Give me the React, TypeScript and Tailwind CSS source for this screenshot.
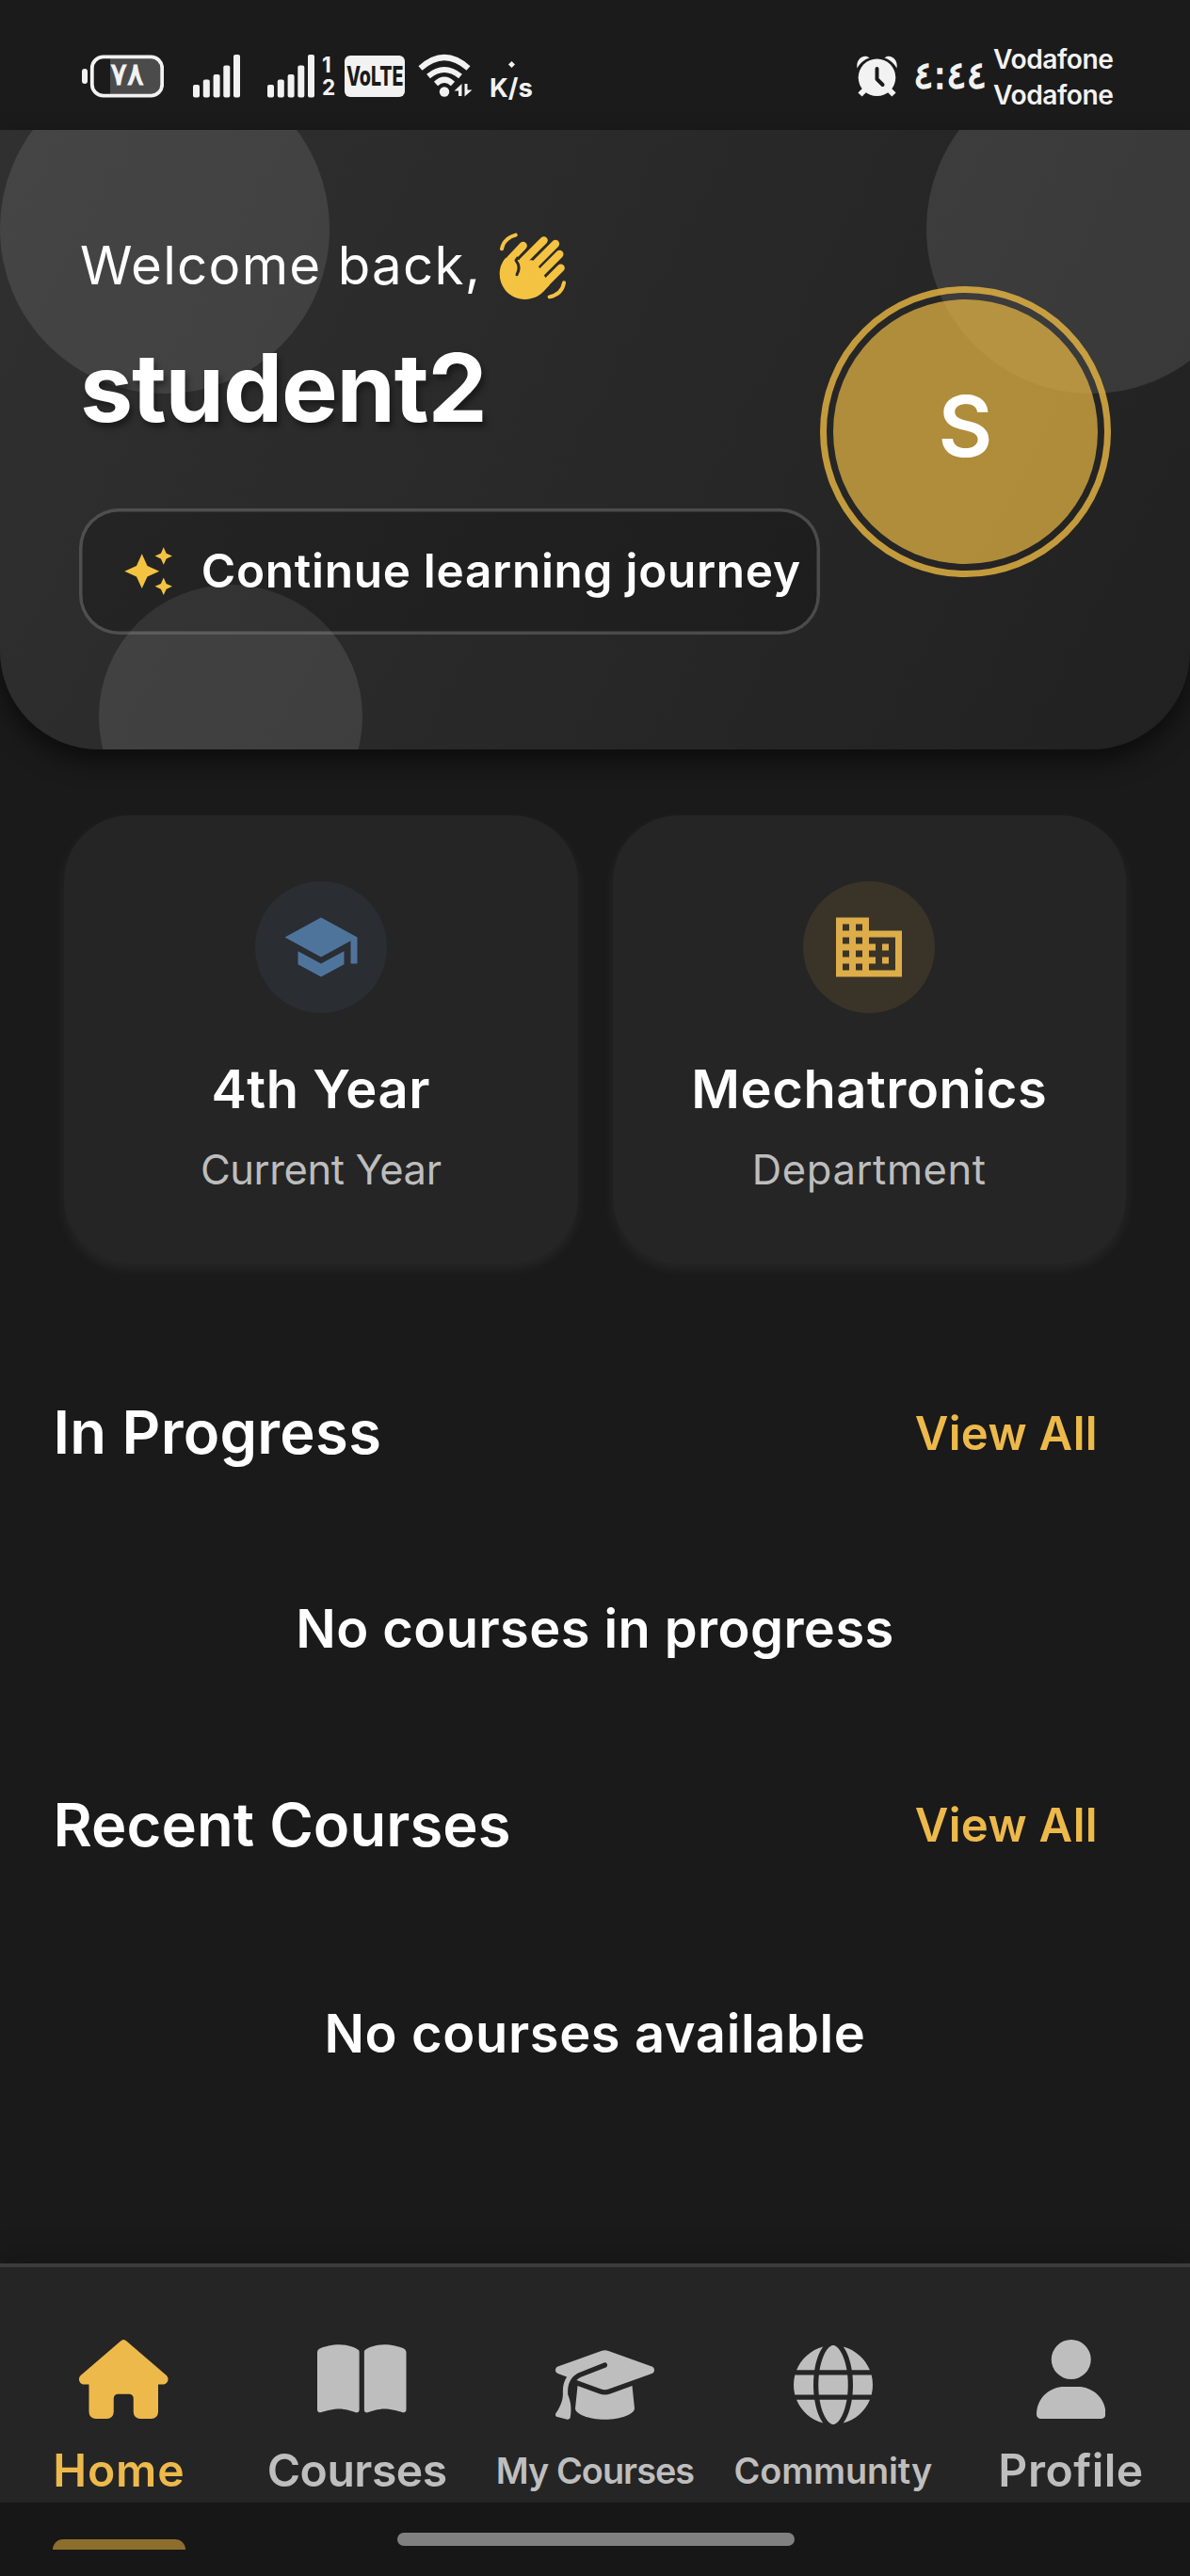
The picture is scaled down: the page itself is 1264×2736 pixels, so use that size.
import type { ReactNode } from "react";
import { MdAutoAwesome, MdBusiness, MdSchool } from "react-icons/md";
import { FaBookOpen, FaGlobe, FaGraduationCap, FaUser } from "react-icons/fa6";

const SIGNAL_BARS = [
  { x: 0, y: 92 },
  { x: 10.8, y: 86.5 },
  { x: 21.6, y: 81 },
  { x: 32.3, y: 71.5 },
  { x: 43, y: 60 },
];

function Battery() {
  return (
    <div className="relative h-[138px] w-[87px] shrink-0">
      <svg viewBox="87 0 87 138" className="h-full w-full">
        <rect x="87" y="73" width="6" height="16" rx="3" fill="#f2f2f2" />
        <path d="M117 62h42a12 12 0 0 1 12 12v14a12 12 0 0 1-12 12h-42z" fill="#4b4b4b" />
        <rect x="97.8" y="60.3" width="74.4" height="41.4" rx="12" fill="none" stroke="#f2f2f2" strokeWidth="3.8" />
      </svg>
      <span className="absolute top-[58px] left-[27px] w-[42px] text-center font-['DejaVu_Sans'] text-[33px] leading-[42px] tracking-[-1.500px] text-[#f2f2f2] [-webkit-text-stroke:1.200px_#f2f2f2]">
        ٧٨
      </span>
    </div>
  );
}

function Signal() {
  return (
    <svg viewBox="0 0 51 138" className="h-[138px] w-[51px] shrink-0">
      {SIGNAL_BARS.map((bar) => (
        <rect key={bar.x} x={bar.x} y={bar.y} width="7" height={105.5 - bar.y} rx="2" fill="#f2f2f2" />
      ))}
    </svg>
  );
}

function Wifi() {
  return (
    <svg viewBox="444 0 58 138" className="h-[138px] w-[58px] shrink-0" fill="none" stroke="#f2f2f2" strokeWidth="6">
      <path d="M446.5 74.5Q472 51.5 497.5 74.5" />
      <path d="M455 83Q472 69 489 83" />
      <path d="M463 91Q472 82.5 481 91" />
      <circle cx="472" cy="99.5" r="5.2" fill="#f2f2f2" stroke="none" />
      <path d="M482.5 98.500L490.500 91V104h-3.500v-5.500zM501.500 97.500L493.500 104.500V91h3v6.500z" fill="#f2f2f2" stroke="none" />
    </svg>
  );
}

function Alarm() {
  return (
    <svg viewBox="909 0 46 138" className="h-[138px] w-[46px] shrink-0">
      <g fill="none" stroke="#f2f2f2" strokeWidth="6" strokeLinecap="butt">
        <path d="M920 94l-6.500 6.500M943 94l6.500 6.500" />
      </g>
      <circle cx="931.500" cy="82.300" r="19.800" fill="#f2f2f2" />
      <path d="M910.500 72.500C908.500 62 918.500 56.500 923.500 61.500C917.500 63.500 913.500 67 910.500 72.500z" fill="#f2f2f2" />
      <path d="M952.500 72.500C954.500 62 944.500 56.500 939.500 61.500C945.500 63.500 949.500 67 952.500 72.500z" fill="#f2f2f2" />
      <path d="M931.500 73v11l6 6" fill="none" stroke="#1a1a1a" strokeWidth="4" strokeLinecap="round" strokeLinejoin="round" />
    </svg>
  );
}

function StatusBar() {
  return (
    <div className="flex h-[138px] shrink-0 items-start bg-[#1b1b1b] pl-[87px] text-[#f2f2f2]">
      <Battery />
      <div className="-mt-[2.500px] ml-[31px]"><Signal /></div>
      <div className="-mt-[2.500px] ml-[28px]"><Signal /></div>
      <div className="mt-[57px] ml-[7px] w-[12px] text-[22.500px] leading-[24px] font-bold">
        <div>1</div>
        <div>2</div>
      </div>
      <div className="mt-[59px] ml-[12px] flex h-[44px] w-[64px] items-center justify-center rounded-[6px] bg-[#f2f2f2] text-[#1a1a1a]">
        <span className="inline-block scale-x-[0.7] text-[28px] font-extrabold">VoLTE</span>
      </div>
      <div className="-mt-[2px] ml-[14px]"><Wifi /></div>
      <div className="mt-[66px] ml-[18px] flex w-[46px] flex-col items-center">
        <span className="size-[5px] rotate-45 bg-[#f2f2f2]" />
        <span className="mt-[5px] text-[27.500px] leading-[34px] font-bold">K/s</span>
      </div>
      <div className="ml-[343px]"><Alarm /></div>
      <span className="mt-[55px] ml-[14px] w-[80px] text-center font-['DejaVu_Sans'] text-[40px] leading-[50px] tracking-[-2px] [-webkit-text-stroke:1.400px_#f2f2f2]">
        ٤:٤٤
      </span>
      <div className="mt-[43.500px] ml-[6px] text-[28.200px] leading-[38px] font-semibold tracking-[-0.450px]">
        <div>Vodafone</div>
        <div>Vodafone</div>
      </div>
    </div>
  );
}

function WavingHand() {
  return (
    <svg viewBox="44 38 216 216" className="h-[72px] w-[72px] shrink-0" fill="none" stroke="#f5c342" strokeLinecap="round">
      <path
        d="M66 118L100 122L108 126L150 126L172 149L191 180L205 205L187 225C155 260 95 260 63 220C40 190 40 146 66 118Z"
        fill="#f5c342"
        stroke="none"
      />
      <path d="M121 80L80 123M187 63L120 130M224 74L155 143M237 107L168 176M241 151L178 214" strokeWidth="25" />
      <path d="M53 90Q59 57 97 46M251 198Q245 234 205 243" strokeWidth="12" />
      <path d="M103 119L98 127Q115 148 101 172" stroke="#2b2b2b" strokeWidth="9" strokeLinejoin="round" />
    </svg>
  );
}

function Header() {
  return (
    <header className="relative h-[658px] shrink-0 rounded-b-[105px] bg-[linear-gradient(117.500deg,#303030,#212121)] shadow-[0_12px_26px_rgba(0,0,0,0.55)]">
      <div className="absolute inset-0 overflow-hidden rounded-b-[105px]">
        <div className="absolute -top-[70px] left-0 size-[350px] rounded-full bg-white/10" />
        <div className="absolute -top-[70px] left-[984px] size-[350px] rounded-full bg-white/10" />
        <div className="absolute top-[483px] left-[105px] size-[280px] rounded-full bg-white/10" />
      </div>
      <div className="relative flex items-start px-[84px]">
        <div className="w-[787px] shrink-0 pt-[108.500px]">
          <div className="flex items-start">
            <span className="ml-[1px] text-[56.400px] leading-[70px] tracking-[1.280px] whitespace-nowrap">Welcome back,</span>
            <div className="ml-[19px]"><WavingHand /></div>
          </div>
          <h1 className="mt-[33px] ml-[1px] text-[100.400px] leading-[120px] font-bold tracking-[-1.200px] [text-shadow:3px_5px_6px_rgba(0,0,0,0.4)]">
            student2
          </h1>
          <div className="mt-[68.800px] flex h-[133.500px] items-center rounded-[42px] bg-black/20 pl-[45.500px] shadow-[inset_0_0_0_3.500px_rgba(255,255,255,0.2)]">
            <MdAutoAwesome className="size-[55.300px] shrink-0 text-[#f5c342]" />
            <span className="-mt-[2px] ml-[29px] text-[49.500px] font-semibold tracking-[0.710px] whitespace-nowrap">
              Continue learning journey
            </span>
          </div>
        </div>
        <div className="mt-[165.500px] flex size-[309px] shrink-0 items-center justify-center rounded-full border-[7px] border-[#ebb944]/80">
          <div className="flex size-[281px] items-center justify-center rounded-full bg-[#ebb944]/70 text-[89px] font-semibold">
            <span className="-mt-[10px]">S</span>
          </div>
        </div>
      </div>
    </header>
  );
}

function StatCard({ icon, title, label, tint }: { icon: ReactNode; title: ReactNode; label: ReactNode; tint: string }) {
  return (
    <div className="flex h-[476px] flex-1 flex-col items-center rounded-[70px] bg-[#252525] pt-[70px] shadow-[0_5px_14px_rgba(255,255,255,0.06)]">
      <div className={`flex size-[140px] items-center justify-center rounded-full ${tint}`}>{icon}</div>
      <div className="mt-[48px] text-[56px] leading-[66px] font-semibold tracking-[0.580px]">{title}</div>
      <div className="mt-[26px] text-[43.500px] leading-[52px] text-[#bdbdbd]">{label}</div>
    </div>
  );
}

function SectionHeading({ title, tracking }: { title: string; tracking: string }) {
  return (
    <div className="flex h-[76px] items-center justify-between pr-[98px] pl-[56.500px]">
      <h2 className={`text-[63.300px] leading-[76px] font-semibold ${tracking}`}>{title}</h2>
      <button className="mt-[3px] text-[49px] leading-[60px] font-semibold tracking-[0.360px] text-[#edb94b]">View All</button>
    </div>
  );
}

function HomeIcon() {
  return (
    <svg viewBox="0 0 576 512" className="h-[84px] w-[94.500px]" fill="currentColor">
      <path d="M267 10Q288-10 309 10L566 232C588 254 572 290 543 290H512V468a44 44 0 0 1-44 44h-72a44 44 0 0 1-44-44V380a28 28 0 0 0-28-28h-72a28 28 0 0 0-28 28V468a44 44 0 0 1-44 44h-72a44 44 0 0 1-44-44V290H33C4 290-12 254 10 232Z" />
    </svg>
  );
}

function NavItem({
  icon,
  label,
  tracking,
  small,
  active,
}: {
  icon: ReactNode;
  label: string;
  tracking: string;
  small?: boolean;
  active?: boolean;
}) {
  const size = small ? "text-[37.800px] leading-[46px]" : "text-[48.100px] leading-[58px]";
  return (
    <div className={`flex w-[252.800px] flex-col items-center justify-center gap-[26px] ${active ? "text-[#edb94b]" : "text-[#bebebe]"}`}>
      <div className="flex h-[84px] w-[84px] items-center justify-start [&>svg]:shrink-0">{icon}</div>
      <span className={`font-semibold whitespace-nowrap ${size} ${tracking}`}>{label}</span>
    </div>
  );
}

export default function App() {
  return (
    <div className="flex h-[2736px] w-[1264px] flex-col overflow-hidden bg-[#1a1a1a] font-['Inter',sans-serif] text-white">
      <StatusBar />
      <Header />
      <main className="flex-1">
        <div className="mt-[69.500px] flex gap-[37px] px-[68px]">
          <StatCard
            icon={<MdSchool className="size-[84px] text-[#4f749c]" />}
            tint="bg-[#2a2d31]"
            title="4th Year"
            label={<span className="tracking-[-0.400px]">Current Year</span>}
          />
          <StatCard
            icon={<MdBusiness className="size-[84px] text-[#ddad49]" />}
            tint="bg-[#3a3328]"
            title="Mechatronics"
            label={<span className="tracking-[0.600px]">Department</span>}
          />
        </div>
        <div className="mt-[141.500px]">
          <SectionHeading title="In Progress" tracking="tracking-[0.280px]" />
        </div>
        <p className="mt-[137px] text-center text-[56px] leading-[68px] font-semibold tracking-[0.410px]">No courses in progress</p>
        <div className="mt-[135.500px]">
          <SectionHeading title="Recent Courses" tracking="tracking-[0.060px]" />
        </div>
        <p className="mt-[150.500px] text-center text-[56px] leading-[68px] font-semibold tracking-[0.620px]">No courses available</p>
      </main>
      <nav className="flex h-[254.500px] shrink-0 border-t-[4px] border-[#3c3c3c] bg-[#252525] pt-[72px] shadow-[0_-7px_30px_rgba(0,0,0,0.2)]">
        <NavItem active icon={<HomeIcon />} label="Home" tracking="tracking-[0.800px]" />
        <NavItem icon={<FaBookOpen className="h-[84px] w-[94.500px]" />} label="Courses" tracking="tracking-[-0.500px]" />
        <NavItem small icon={<FaGraduationCap className="h-[84px] w-[105px]" />} label="My Courses" tracking="tracking-[-0.950px]" />
        <NavItem small icon={<FaGlobe className="size-[84px]" />} label="Community" tracking="tracking-[-0.100px]" />
        <NavItem icon={<FaUser className="mx-auto h-[84px] w-[73.500px]" />} label="Profile" tracking="tracking-[0.500px]" />
      </nav>
      <div className="relative h-[78px] shrink-0 bg-[#171717]">
        <div className="mt-[39px] ml-[56px] h-[11px] w-[141px] rounded-t-[11px] bg-[#8e6e2c]" />
        <div className="absolute top-[32px] left-[422px] h-[14px] w-[422px] rounded-full bg-[#808080]" />
      </div>
    </div>
  );
}
